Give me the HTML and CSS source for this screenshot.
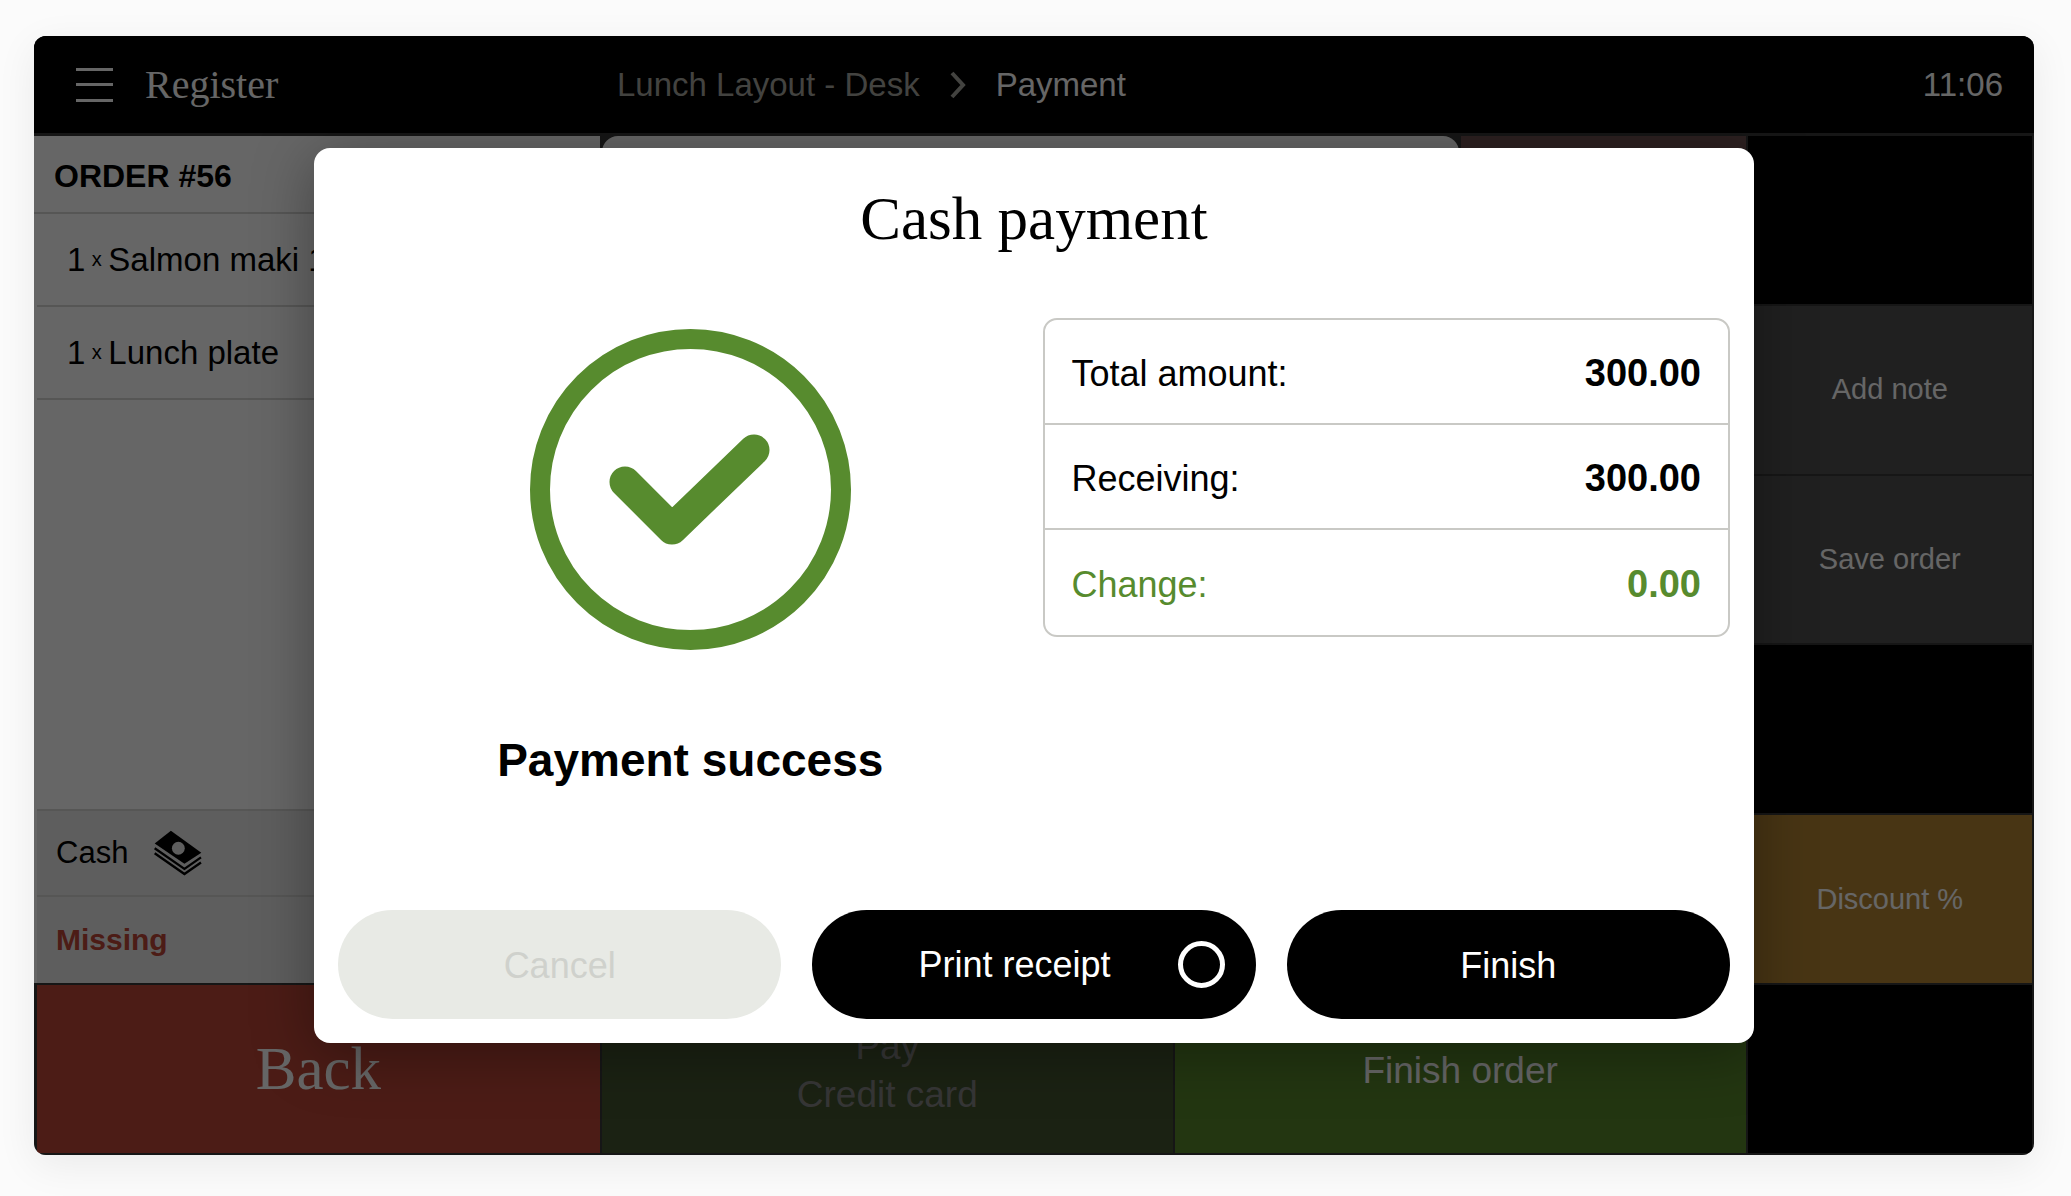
FILE: index.html
```html
<!DOCTYPE html>
<html lang="en">
    <head>
        <meta charset="utf-8" />
        <title>Register - Payment</title>
        <meta name="viewport" content="width=device-width, initial-scale=1.0" />
        <link rel="stylesheet" href="styles.css">
    </head>
    <body>
        <div class="app">
            <header>
                <div class="brand">
                    <button class="menu" aria-label="Menu"><span></span><span></span><span></span></button>
                    <h1>Register</h1>
                </div>
                <nav class="breadcrumb">
                    <a href="#">Lunch Layout - Desk</a>
                    <svg width="16" height="28" viewBox="0 0 16 28"><path d="M2 2 L13 14 L2 26" /></svg>
                    <span>Payment</span>
                </nav>
                <time>11:06</time>
            </header>
            <div class="board">
                <section class="order">
                    <h2>ORDER #56</h2>
                    <ul>
                        <li><span>1</span><small>x</small><span>Salmon maki 1</span></li>
                        <li><span>1</span><small>x</small><span>Lunch plate</span></li>
                    </ul>
                    <div class="totals">
                        <div class="cash">
                            Cash
                            <svg width="48" height="46" viewBox="75 58 142 136">
                                <path d="M125 60 L215 125 L165 158 L77 98 Z" />
                                <ellipse cx="147" cy="112" rx="19" ry="19" />
                                <path class="note" d="M77 112 L165 173 L214 139" />
                                <path class="note" d="M77 127 L165 188 L214 154" />
                            </svg>
                        </div>
                        <div class="missing">Missing</div>
                    </div>
                </section>
                <div class="panel"></div>
                <div class="tile brown"></div>
                <div class="side">
                    <div class="tile"></div>
                    <button class="tile grey">Add note</button>
                    <button class="tile grey">Save order</button>
                    <div class="tile"></div>
                    <button class="tile amber">Discount %</button>
                    <div class="tile"></div>
                </div>
                <button class="tile back">Back</button>
                <button class="tile pay" disabled>Pay<br>Credit card</button>
                <button class="tile finish">Finish order</button>
            </div>
            <div class="overlay">
                <div class="modal" role="dialog" aria-labelledby="modal-title">
                    <h2 id="modal-title">Cash payment</h2>
                    <div class="content">
                        <div class="result">
                            <svg width="321" height="321" viewBox="0 0 321 321">
                                <circle cx="160.5" cy="160.5" r="150.5" />
                                <path d="M95 153 L142 200 L224 121" />
                            </svg>
                            <p>Payment success</p>
                        </div>
                        <table>
                            <tr><th scope="row">Total amount:</th><td>300.00</td></tr>
                            <tr><th scope="row">Receiving:</th><td>300.00</td></tr>
                            <tr class="change"><th scope="row">Change:</th><td>0.00</td></tr>
                        </table>
                    </div>
                    <div class="actions">
                        <button class="pill" disabled>Cancel</button>
                        <label class="pill print" for="print-receipt">
                            <span>Print receipt</span>
                            <input type="checkbox" id="print-receipt">
                        </label>
                        <button class="pill">Finish</button>
                    </div>
                </div>
            </div>
        </div>
    </body>
</html>
```
FILE: styles.css
```css
* {
    margin: 0;
    padding: 0;
    box-sizing: border-box;
}
body {
    min-height: 100vh;
    padding: 36px 37px 41px 34px;
    display: flex;
    background-color: #fbfbfb;
    font-family: "Liberation Sans", Arial, sans-serif;
    color: #000;
}
button {
    border: 0;
    font-family: inherit;
    cursor: pointer;
}
.app {
    flex: 1;
    min-width: 0;
    position: relative;
    display: flex;
    flex-direction: column;
    overflow: hidden;
    border-radius: 12px;
    background-color: #373737;
    box-shadow: 0 10px 40px rgba(0, 0, 0, 0.07);
}

/* top bar */
header {
    display: grid;
    grid-template-columns: 583fr 1306fr auto;
    align-items: center;
    height: 97px;
    padding-right: 31px;
    background-color: #000;
    color: #fff;
    font-size: 33px;
}
.brand {
    display: flex;
    align-items: center;
    gap: 32px;
    padding-left: 42px;
}
.menu {
    width: 37px;
    height: 34px;
    display: flex;
    flex-direction: column;
    justify-content: space-between;
    background-color: transparent;
}
.menu span {
    height: 3px;
    background-color: #fff;
}
h1 {
    font-family: "Liberation Serif", "Times New Roman", serif;
    font-weight: normal;
    font-size: 40px;
}
.breadcrumb {
    display: flex;
    align-items: center;
    gap: 30px;
}
.breadcrumb a {
    color: #a8a8a0;
    text-decoration: none;
}
.breadcrumb svg {
    fill: none;
    stroke: #a8a8a0;
    stroke-width: 4;
}

/* board */
.board {
    flex: 1;
    display: grid;
    grid-template-columns: minmax(0, 565fr) repeat(5, minmax(0, 284fr));
    grid-template-rows: repeat(6, 1fr);
    gap: 2px;
    padding: 3px 2px 2px 0;
}
.order {
    grid-row: 1 / span 5;
    display: flex;
    flex-direction: column;
    background-color: #fff;
    font-size: 33px;
}
.order h2 {
    padding: 4px 20px 0;
    line-height: 72px;
    font-size: 32px;
    border-bottom: 2px solid #d8d8d5;
}
.order ul {
    flex: 1;
    list-style: none;
}
.order li {
    display: flex;
    align-items: center;
    height: 93px;
    padding-left: 30px;
    margin-left: 3px;
    border-bottom: 2px solid #d8d8d5;
}
.order small {
    width: 23px;
    text-align: center;
    font-size: 20px;
}
.totals {
    margin-left: 3px;
    background-color: #ececec;
    border-top: 2px solid #d8d8d5;
    font-size: 31px;
}
.cash, .missing {
    display: flex;
    align-items: center;
    height: 86px;
    padding-left: 19px;
}
.cash {
    gap: 26px;
    border-bottom: 2px solid #d8d8d5;
}
.cash ellipse {
    fill: #ececec;
}
.cash .note {
    fill: none;
    stroke: #000;
    stroke-width: 7;
}
.missing {
    color: #be4637;
    font-size: 30px;
    font-weight: bold;
}
.panel {
    grid-row: 1 / span 5;
    grid-column: 2 / span 3;
    background-color: #fff;
    border-radius: 16px;
}
.tile {
    background-color: #000;
    color: #fff;
    font-size: 29px;
}
.side {
    grid-row: 1 / span 6;
    grid-column: 6;
    display: grid;
    grid-template-rows: repeat(6, 1fr);
    gap: 2px;
}
.brown {
    grid-row: 1 / span 5;
    background-color: #6e5050;
}
.grey {
    background-color: #505050;
}
.amber {
    background-color: #b48532;
}
.back {
    grid-row: 6;
    margin-left: 3px;
    background-color: #be4637;
    font-family: "Liberation Serif", "Times New Roman", serif;
    font-size: 61px;
}
.pay, .finish {
    grid-row: 6;
    grid-column: span 2;
    padding-top: 3px;
    font-size: 37px;
    line-height: 48px;
}
.pay {
    background-color: #445530;
    color: #888;
}
.finish {
    background-color: #58872b;
}

/* payment dialog */
.overlay {
    position: absolute;
    inset: 0;
    display: flex;
    align-items: center;
    justify-content: center;
    background-color: rgba(0, 0, 0, 0.6);
}
.modal {
    width: 72%;
    padding: 35px 24px 24px;
    border-radius: 16px;
    background-color: #fff;
    box-shadow: 0 10px 60px rgba(0, 0, 0, 0.35);
}
.modal h2 {
    margin-bottom: 63px;
    font-family: "Liberation Serif", "Times New Roman", serif;
    font-weight: normal;
    font-size: 61px;
    line-height: 72px;
    text-align: center;
}
.content {
    display: grid;
    grid-template-columns: 704fr 687fr;
    align-items: start;
    margin-bottom: 122px;
}
.result {
    padding-top: 11px;
    text-align: center;
}
.result svg {
    display: block;
    margin: 0 auto 82px;
    fill: none;
    stroke: #578b2e;
    stroke-width: 20;
}
.result path {
    stroke-width: 31;
    stroke-linecap: round;
    stroke-linejoin: round;
}
.result p {
    font-size: 46px;
    font-weight: bold;
    line-height: 56px;
}
table {
    width: 100%;
    border: 2px solid #c9c9c5;
    border-radius: 14px;
    border-spacing: 0;
}
th, td {
    height: 105px;
    padding: 4px 27px 0;
    border-bottom: 2px solid #c9c9c5;
    font-size: 36px;
    font-weight: normal;
    text-align: left;
}
td {
    font-size: 38px;
    font-weight: bold;
    text-align: right;
}
.change th, .change td {
    border-bottom: 0;
    color: #578b2e;
}
.actions {
    display: grid;
    grid-template-columns: repeat(3, 1fr);
    gap: 31px;
}
.pill {
    display: flex;
    align-items: center;
    justify-content: center;
    height: 109px;
    padding-top: 3px;
    border-radius: 55px;
    background-color: #000;
    color: #fff;
    font-size: 36px;
    cursor: pointer;
}
.pill:disabled {
    background-color: #e8eae5;
    color: #cfd1cc;
}
.print {
    padding: 0 31px 0 39px;
}
.print span {
    flex: 1;
    text-align: center;
}
.print input {
    appearance: none;
    width: 47px;
    height: 47px;
    border: 5px solid #fff;
    border-radius: 50%;
}
```
